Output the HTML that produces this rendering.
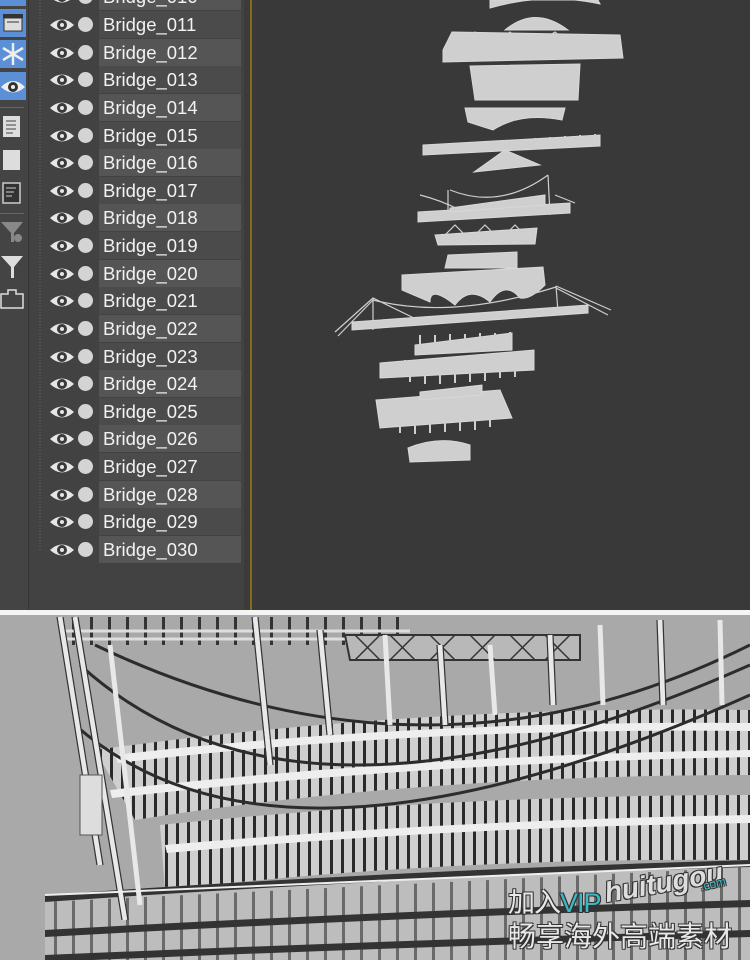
<!DOCTYPE html>
<html><head><meta charset="utf-8"><style>
*{margin:0;padding:0;box-sizing:border-box}
body{width:750px;height:960px;overflow:hidden;background:#fff;position:relative;font-family:"Liberation Sans",sans-serif}
#top{position:absolute;left:0;top:0;width:750px;height:610px;background:#3b3b3b}
#tb{position:absolute;left:0;top:0;width:28px;height:610px;background:#444}
#tree{position:absolute;left:28px;top:0;width:216px;height:610px;background:#424242;border-left:1px solid #353535}
#vp{position:absolute;left:250px;top:0;width:500px;height:610px;background:#393939;border-left:2px solid #8a6a1a;overflow:hidden}
.row{position:absolute;left:0;width:215px;height:27px}
.row .lbl{position:absolute;left:70px;top:0;width:142px;height:27px;font-size:18.5px;color:#f2f2f2;line-height:27px;padding-left:4px}
.a .lbl{background:#4b4b4b}.b .lbl{background:#555}
.row svg{position:absolute;left:20px;top:6px}
.dot{position:absolute;left:49px;top:6px;width:15px;height:15px;border-radius:50%;background:#d4d4d4}
.bt{position:absolute;left:0;width:26px;height:28px}
#bot{position:absolute;left:0;top:615px;width:750px;height:345px;background:#a9a9a9;overflow:hidden}
.wm{position:absolute;color:#e8e8e8;font-family:"Liberation Sans","Noto Sans CJK SC",sans-serif;text-shadow:-1px -1px 0 #333,1px -1px 0 #333,-1px 1px 0 #333,1px 1px 0 #333}
</style></head><body>
<div id="top">
<div id="tb">
 <div class="bt" style="top:0;height:6px;background:#5b8fd6"></div>
 <div class="bt" style="top:9px;background:#5b8fd6"><svg width="26" height="28"><rect x="3" y="5" width="20" height="4" fill="#333"/><rect x="4" y="9" width="18" height="13" fill="#ddd" stroke="#333"/><line x1="7" y1="13" x2="19" y2="13" stroke="#333"/></svg></div>
 <div class="bt" style="top:40px;background:#5b8fd6"><svg width="26" height="28"><g stroke="#eee" stroke-width="2.5"><line x1="13" y1="3" x2="13" y2="25"/><line x1="3" y1="8" x2="23" y2="20"/><line x1="3" y1="20" x2="23" y2="8"/></g></svg></div>
 <div class="bt" style="top:72px;background:#5b8fd6"><svg width="26" height="28"><path d="M1 15 Q13 3 25 15 Q13 26 1 15Z" fill="#eee"/><circle cx="13" cy="15" r="5" fill="#333"/><circle cx="13" cy="15" r="2" fill="#eee"/></svg></div>
 <div style="position:absolute;left:0;top:107px;width:24px;height:1px;background:#666"></div>
 <svg style="position:absolute;left:0;top:112px" width="26" height="100"><rect x="3" y="4" width="17" height="21" fill="#ddd"/><g stroke="#444"><line x1="6" y1="9" x2="16" y2="9"/><line x1="6" y1="13" x2="16" y2="13"/><line x1="6" y1="17" x2="16" y2="17"/><line x1="6" y1="21" x2="13" y2="21"/></g><rect x="3" y="38" width="17" height="20" fill="#ddd"/><rect x="3" y="71" width="17" height="20" fill="#333" stroke="#ccc" stroke-width="1.5"/><g stroke="#ccc"><line x1="6" y1="76" x2="16" y2="76"/><line x1="6" y1="80" x2="14" y2="80"/><line x1="6" y1="84" x2="12" y2="84"/></g></svg>
 <div style="position:absolute;left:0;top:213px;width:24px;height:1px;background:#666"></div>
 <svg style="position:absolute;left:0;top:218px" width="26" height="95"><path d="M1 4 H23 L14 15 V24 H11 V15Z" fill="#888"/><circle cx="18" cy="20" r="4" fill="#888"/><path d="M1 38 H23 L14 49 V60 H11 V49Z" fill="#ddd"/><path d="M1 76 H8 V72 H16 V76 H23 V90 H1Z" fill="none" stroke="#ddd" stroke-width="1.5"/></svg>
</div>
<div id="tree">
 <svg style="position:absolute;left:0;top:0" width="40" height="560"><line x1="11" y1="0" x2="11" y2="550" stroke="#666" stroke-dasharray="1 2"/></svg>
 <div id="rows"></div>
</div>
<div id="vp">
<svg width="750" height="610" style="position:absolute;left:-252px;top:0" viewBox="0 0 750 610">
<g fill="#cfcfcf" stroke="#d8d8d8" stroke-width="1">
<path d="M490 8 Q545 -8 600 4 L598 0 L490 0Z"/>
<path d="M505 30 Q535 5 568 30Z"/>
<path d="M452 32 L620 35 L623 58 L443 62 L443 50Z"/>
<path d="M470 66 L580 64 L578 100 L475 100Z"/>
<path d="M465 108 L565 108 L562 120 Q520 112 493 130 L468 122Z"/>
<path d="M423 145 L600 135 L600 146 L423 155Z"/>
<path d="M474 172 L540 165 L505 150Z"/>
<path d="M418 212 L570 203 L570 213 L418 222Z"/>
<path d="M450 208 L545 195 L545 205 L450 212Z"/>
<path d="M435 235 L537 228 L535 244 L438 245Z"/>
<path d="M448 255 L517 252 L517 268 L445 268Z"/>
<path d="M402 275 L543 267 L545 285 Q530 300 520 298 Q505 280 490 302 Q470 285 455 305 Q430 285 430 302 L402 290Z"/>
<path d="M352 322 L588 305 L588 313 L352 330Z"/>
<path d="M380 363 L534 350 L534 370 L380 378Z"/>
<path d="M415 345 L512 333 L512 350 L415 355Z"/>
<path d="M376 400 L500 390 L512 418 L380 428Z"/>
<path d="M420 392 L482 385 L482 395 L420 400Z"/>
<path d="M408 448 Q440 435 470 445 L470 460 L410 462Z"/>
</g>
<g stroke="#cfcfcf" stroke-width="1.2" fill="none">
<path d="M455 45 L475 32 L490 48 L510 32 L530 48 L555 32 L575 48 L600 35"/>
<path d="M448 190 L448 220 M548 175 L550 215"/>
<path d="M450 190 Q500 210 548 175"/>
<path d="M420 195 Q440 200 460 210 M555 195 L575 203"/>
<path d="M373 298 L373 330 M556 286 L558 312"/>
<path d="M335 332 L373 298 L418 320 M338 336 L373 300"/>
<path d="M556 286 L611 310 M556 288 L608 315"/>
<path d="M373 300 Q450 320 556 287"/>
<path d="M440 240 L455 225 L470 240 L485 225 L500 240 L515 225 L530 240"/>
</g>
<g stroke="#cfcfcf" stroke-width="2">
<path d="M430 145 v10 M445 144 v10 M460 143 v10 M475 142 v10 M490 141 v10 M505 140 v10 M520 139 v10 M535 138 v10 M550 137 v10 M565 136 v10 M580 135 v10 M595 134 v10"/>
<path d="M405 360 v12 M420 335 v12 M435 335 v12 M450 334 v12 M465 334 v12 M480 333 v12 M495 333 v12 M510 332 v12 M410 370 v12 M425 370 v14 M440 370 v14 M455 369 v14 M470 368 v14 M485 367 v14 M500 366 v12 M515 365 v12"/>
<path d="M400 425 v8 M415 424 v10 M430 423 v10 M445 422 v10 M460 421 v10 M475 420 v10 M490 419 v8"/>
</g>
</svg>
</div>
</div>
<div style="position:absolute;left:0;top:610px;width:750px;height:5px;background:#f4f4f4"></div>
<div id="bot">
<svg width="750" height="345" viewBox="0 610 750 345">
<defs>
<pattern id="vl" width="11" height="20" patternUnits="userSpaceOnUse"><rect width="11" height="20" fill="#cfcfcf"/><rect x="0" width="3" height="20" fill="#2a2a2a"/></pattern>
<pattern id="vl2" width="18" height="20" patternUnits="userSpaceOnUse"><rect x="0" width="3" height="20" fill="#333"/></pattern>
</defs>
<rect x="0" y="610" width="750" height="345" fill="#a9a9a9"/>
<path d="M95 745 Q420 700 750 705 L750 770 Q420 770 135 815Z" fill="url(#vl)"/>
<path d="M115 750 Q420 715 750 718 L750 726 Q420 722 118 758Z" fill="#eee"/>
<path d="M110 785 Q420 750 750 745 L750 752 Q420 758 112 793Z" fill="#eee"/>
<path d="M160 820 Q450 790 750 790 L750 855 Q450 852 165 885Z" fill="url(#vl)"/>
<path d="M165 840 Q450 815 750 810 L750 818 Q450 822 167 848Z" fill="#eee"/>
<path d="M45 890 Q400 865 750 855 L750 960 L45 960Z" fill="#bdbdbd"/>
<path d="M45 890 Q400 865 750 855 L750 862 Q400 872 45 897Z" fill="#333"/>
<path d="M45 925 Q400 905 750 895 L750 902 Q400 912 45 932Z" fill="#333"/>
<path d="M45 950 Q400 935 750 925 L750 932 Q400 942 45 957Z" fill="#333"/>
<path d="M45 897 L750 862 L750 960 L45 960Z" fill="url(#vl2)" opacity=".6"/>
<path d="M60 612 H410 V640 H60Z" fill="url(#vl2)"/>
<path d="M60 626 H410 M60 634 H410" stroke="#ddd" stroke-width="3"/>
<path d="M345 630 H580 V655 H350Z" fill="#b8b8b8" stroke="#333" stroke-width="2"/>
<path d="M355 630 L380 655 M380 630 L355 655 M390 630 L415 655 M415 630 L390 655 M430 630 L455 655 M455 630 L430 655 M470 630 L495 655 M495 630 L470 655 M510 630 L535 655 M535 630 L510 655 M545 630 L570 655 M570 630 L545 655" stroke="#333" stroke-width="1.5"/>
<g stroke="#2c2c2c" stroke-width="3" fill="none">
<path d="M95 640 Q430 800 750 640"/>
<path d="M80 660 Q300 860 750 660"/>
<path d="M75 720 Q280 900 750 690"/>
</g>
<g stroke="#e8e8e8" stroke-width="5">
<path d="M60 612 L100 860 M75 612 L125 915 M110 640 L140 900"/>
<path d="M255 612 L270 760 M320 625 L330 730 M385 630 L390 720 M440 640 L445 720 M490 640 L495 710 M550 630 L553 700 M600 620 L603 700 M660 615 L663 700 M720 615 L722 700"/>
</g>
<g stroke="#333" stroke-width="1.2">
<path d="M57 612 L97 860 M63 612 L103 860 M72 612 L122 915 M78 612 L128 915 M252 612 L267 760 M258 612 L273 760 M317 625 L327 730 M323 625 L333 730 M437 640 L442 720 M443 640 L448 720 M547 630 L550 700 M553 630 L556 700 M657 615 L660 700 M663 615 L666 700"/>
</g>
<rect x="80" y="770" width="22" height="60" fill="#ddd" stroke="#555"/>
<path d="M45 890 L750 860" stroke="#eee" stroke-width="2"/>
</svg>
<div class="wm" style="left:508px;top:266px;font-size:27px;letter-spacing:-1px">加入<span style="color:#3bb8c4">VIP</span></div>
<div class="wm" style="left:604px;top:252px;font-size:28px;font-weight:bold;font-style:italic;transform:rotate(-10deg);color:#ddd">huitugou</div>
<div class="wm" style="left:700px;top:262px;font-size:12px;color:#3bb8c4;transform:rotate(-12deg)">.com</div>
<div class="wm" style="left:508px;top:300px;font-size:28px">畅享海外高端素材</div>
</div>
<script>
var h='',y0=11-27.63;
for(var i=0;i<21;i++){var n=10+i;var y=Math.round(y0+27.63*i);
h+='<div class="row '+(i%2?'a':'b')+'" style="top:'+y+'px"><svg width="26" height="16"><path d="M1 8 Q13 -3 25 8 Q13 19 1 8Z" fill="#e6e6e6"/><circle cx="13" cy="8" r="5" fill="#3a3a3a"/><circle cx="13" cy="8" r="2" fill="#e6e6e6"/></svg><div class="dot"></div><div class="lbl">Bridge_0'+(n<10?'0':'')+n+'</div></div>';}
document.getElementById('rows').innerHTML=h;
</script>
</body></html>
